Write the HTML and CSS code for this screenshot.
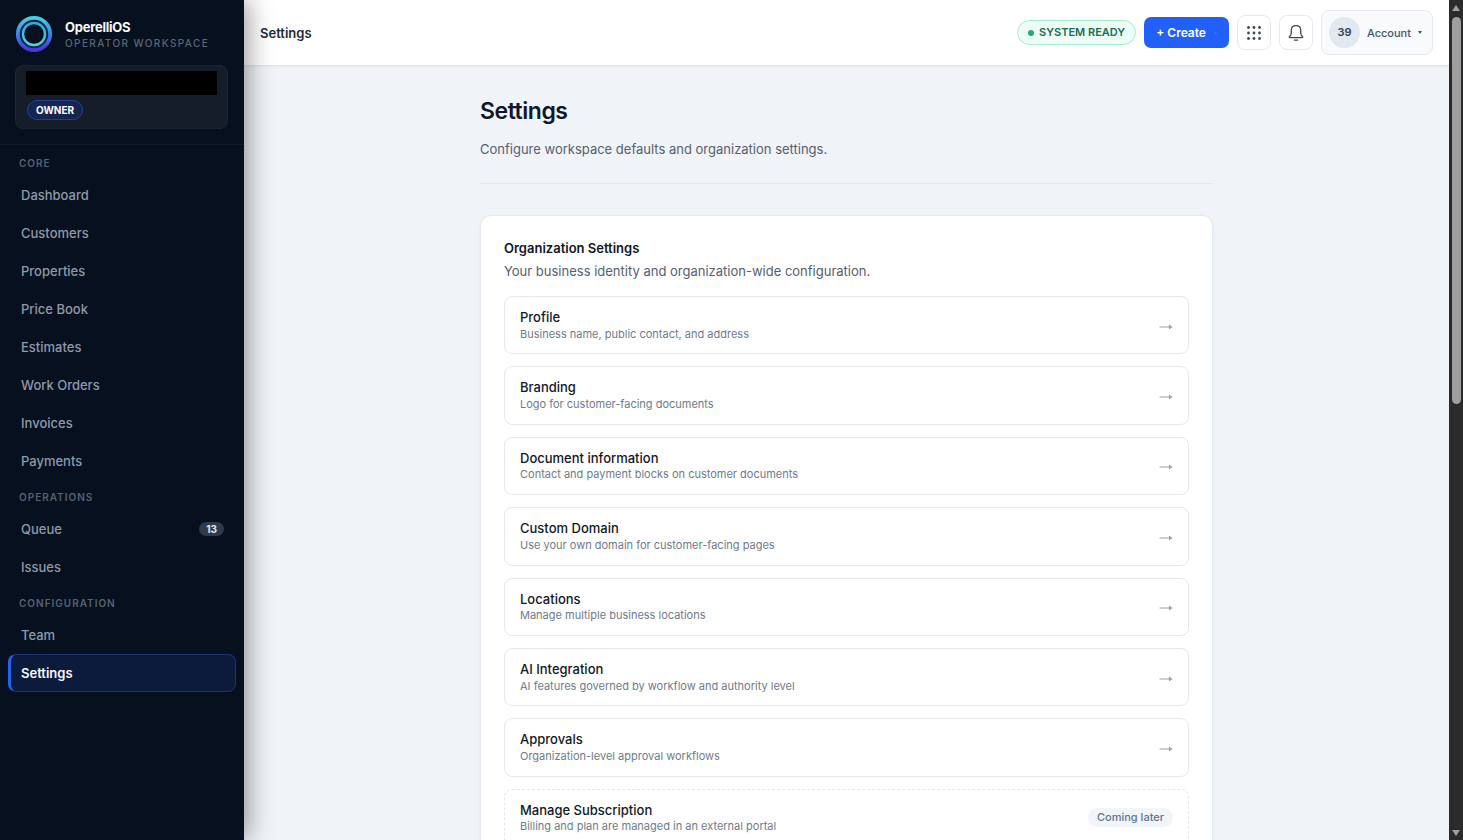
FILE: index.html
```html
<!DOCTYPE html>
<html lang="en">
<head>
<meta charset="utf-8">
<meta name="viewport" content="width=device-width, initial-scale=1">
<title>Settings – OperelliOS</title>
<link rel="stylesheet" href="styles.css">
</head>
<body>
<div class="app">
  <aside class="sidebar">
    <div class="sidebar-head">
      <div class="brand">
        <svg class="brand-logo" viewBox="0 0 38 38" aria-hidden="true">
          <defs>
            <linearGradient id="ring" x1="0" y1="0" x2="0" y2="1">
              <stop offset="0" stop-color="#45cfe0"/>
              <stop offset="0.5" stop-color="#3d86e6"/>
              <stop offset="1" stop-color="#4a35d8"/>
            </linearGradient>
            <linearGradient id="ring-inner" x1="0" y1="0" x2="0" y2="1">
              <stop offset="0" stop-color="#3aa5dc"/>
              <stop offset="1" stop-color="#52d3d8"/>
            </linearGradient>
          </defs>
          <circle cx="19" cy="19" r="14" fill="none" stroke="#10244f" stroke-width="5"/>
          <circle cx="19" cy="19" r="16.2" fill="none" stroke="url(#ring)" stroke-width="3.8"/>
          <circle cx="19" cy="19" r="11" fill="#07101f" stroke="url(#ring-inner)" stroke-width="2.4"/>
        </svg>
        <div class="brand-text">
          <span class="brand-name">OperelliOS</span>
          <span class="brand-sub">OPERATOR WORKSPACE</span>
        </div>
      </div>
      <div class="org">
        <div class="org-name"></div>
        <span class="org-role">OWNER</span>
      </div>
    </div>
    <nav class="nav" aria-label="Main">
      <h2 class="nav-label">CORE</h2>
      <a class="nav-item" href="#dashboard">Dashboard</a>
      <a class="nav-item" href="#customers">Customers</a>
      <a class="nav-item" href="#properties">Properties</a>
      <a class="nav-item" href="#price-book">Price Book</a>
      <a class="nav-item" href="#estimates">Estimates</a>
      <a class="nav-item" href="#work-orders">Work Orders</a>
      <a class="nav-item" href="#invoices">Invoices</a>
      <a class="nav-item" href="#payments">Payments</a>
      <h2 class="nav-label">OPERATIONS</h2>
      <a class="nav-item" href="#queue">Queue <span class="nav-count">13</span></a>
      <a class="nav-item" href="#issues">Issues</a>
      <h2 class="nav-label">CONFIGURATION</h2>
      <a class="nav-item" href="#team">Team</a>
      <a class="nav-item nav-item-active" href="#settings" aria-current="page">Settings</a>
    </nav>
  </aside>

  <div class="workspace">
    <header class="topbar">
      <span class="topbar-title">Settings</span>
      <div class="topbar-actions">
        <span class="status"><span class="status-dot"></span>SYSTEM READY</span>
        <button class="create" type="button"><span>+ Create</span><span class="create-caret"></span></button>
        <button class="icon-button" type="button" aria-label="Apps">
          <svg width="16" height="16" viewBox="0 0 16 16" fill="#3d4757" aria-hidden="true">
            <circle cx="2.500" cy="2.500" r="1.400"/><circle cx="8" cy="2.500" r="1.400"/><circle cx="13.500" cy="2.500" r="1.400"/>
            <circle cx="2.500" cy="8" r="1.400"/><circle cx="8" cy="8" r="1.400"/><circle cx="13.500" cy="8" r="1.400"/>
            <circle cx="2.500" cy="13.500" r="1.400"/><circle cx="8" cy="13.500" r="1.400"/><circle cx="13.500" cy="13.500" r="1.400"/>
          </svg>
        </button>
        <button class="icon-button" type="button" aria-label="Notifications">
          <svg width="18" height="18" viewBox="0 0 18 18" fill="none" stroke="#3d4757" stroke-width="1.3" stroke-linecap="round" stroke-linejoin="round" aria-hidden="true">
            <path d="M9 1.6c-2.900 0-4.700 2-4.700 4.700v2.800c0 1.500-.7 2.600-1.900 3.700-.3.3-.1.8.3.8h12.600c.4 0 .6-.5.3-.8-1.200-1.100-1.900-2.200-1.900-3.700V6.300C13.700 3.600 11.900 1.600 9 1.600z"/>
            <path d="M7.500 16.200h3"/>
          </svg>
        </button>
        <button class="account" type="button">
          <span class="avatar">39</span>
          <span>Account</span>
          <span class="account-caret"></span>
        </button>
      </div>
    </header>

    <main class="content">
      <div class="page">
        <div class="page-head">
          <h1 class="page-title">Settings</h1>
          <p class="page-desc">Configure workspace defaults and organization settings.</p>
        </div>
        <section class="card">
          <h2 class="card-title">Organization Settings</h2>
          <p class="card-desc">Your business identity and organization-wide configuration.</p>
          <div class="rows">
            <a class="row" href="#profile"><span class="row-text"><span class="row-title">Profile</span><span class="row-desc">Business name, public contact, and address</span></span><svg class="arrow" viewBox="0 0 14 8" aria-hidden="true"><path class="arrow-line" d="M0.500 4h11"/><path class="arrow-tip" d="M10 1.500L13.500 4 10 6.500z"/></svg></a>
            <a class="row" href="#branding"><span class="row-text"><span class="row-title">Branding</span><span class="row-desc">Logo for customer-facing documents</span></span><svg class="arrow" viewBox="0 0 14 8" aria-hidden="true"><path class="arrow-line" d="M0.500 4h11"/><path class="arrow-tip" d="M10 1.500L13.500 4 10 6.500z"/></svg></a>
            <a class="row" href="#documents"><span class="row-text"><span class="row-title">Document information</span><span class="row-desc">Contact and payment blocks on customer documents</span></span><svg class="arrow" viewBox="0 0 14 8" aria-hidden="true"><path class="arrow-line" d="M0.500 4h11"/><path class="arrow-tip" d="M10 1.500L13.500 4 10 6.500z"/></svg></a>
            <a class="row" href="#domain"><span class="row-text"><span class="row-title">Custom Domain</span><span class="row-desc">Use your own domain for customer-facing pages</span></span><svg class="arrow" viewBox="0 0 14 8" aria-hidden="true"><path class="arrow-line" d="M0.500 4h11"/><path class="arrow-tip" d="M10 1.500L13.500 4 10 6.500z"/></svg></a>
            <a class="row" href="#locations"><span class="row-text"><span class="row-title">Locations</span><span class="row-desc">Manage multiple business locations</span></span><svg class="arrow" viewBox="0 0 14 8" aria-hidden="true"><path class="arrow-line" d="M0.500 4h11"/><path class="arrow-tip" d="M10 1.500L13.500 4 10 6.500z"/></svg></a>
            <a class="row" href="#ai"><span class="row-text"><span class="row-title">AI Integration</span><span class="row-desc">AI features governed by workflow and authority level</span></span><svg class="arrow" viewBox="0 0 14 8" aria-hidden="true"><path class="arrow-line" d="M0.500 4h11"/><path class="arrow-tip" d="M10 1.500L13.500 4 10 6.500z"/></svg></a>
            <a class="row" href="#approvals"><span class="row-text"><span class="row-title">Approvals</span><span class="row-desc">Organization-level approval workflows</span></span><svg class="arrow" viewBox="0 0 14 8" aria-hidden="true"><path class="arrow-line" d="M0.500 4h11"/><path class="arrow-tip" d="M10 1.500L13.500 4 10 6.500z"/></svg></a>
            <div class="row row-disabled"><span class="row-text"><span class="row-title">Manage Subscription</span><span class="row-desc">Billing and plan are managed in an external portal</span></span><span class="tag">Coming later</span></div>
          </div>
        </section>
      </div>
    </main>
  </div>

  <div class="scrollbar" aria-hidden="true">
    <svg class="scroll-arrow" viewBox="0 0 10 8"><path d="M5 1L9 7H1z"/></svg>
    <div class="scroll-track"><div class="scroll-thumb"></div></div>
    <svg class="scroll-arrow" viewBox="0 0 10 8"><path d="M5 7L1 1h8z"/></svg>
  </div>
</div>
</body>
</html>
```
FILE: styles.css
```css
* {
  box-sizing: border-box;
}

body {
  margin: 0;
  font-family: Inter, "Liberation Sans", sans-serif;
  font-size: 13px;
  color: #111827;
}

h1, h2, p {
  margin: 0;
}

a {
  color: inherit;
  text-decoration: none;
}

button {
  font: inherit;
  cursor: pointer;
}

.app {
  display: grid;
  grid-template-columns: 244px minmax(0, 1fr) 14px;
  height: 100vh;
  overflow: hidden;
}

/* Sidebar */
.sidebar {
  position: relative;
  z-index: 2;
  background: #06101e;
  box-shadow: 4px 0 24px rgba(0, 0, 0, 0.4);
}

.sidebar-head {
  padding: 15px 16px 15px 15px;
  border-bottom: 1px solid #121d2b;
}

.brand {
  display: flex;
  align-items: center;
  gap: 12px;
  height: 38px;
}

.brand-logo {
  width: 38px;
  height: 38px;
}

.brand-text {
  display: flex;
  flex-direction: column;
}

.brand-name {
  font-size: 13px;
  line-height: 18px;
  font-weight: 700;
  letter-spacing: -0.02em;
  color: #f8fafc;
}

.brand-sub {
  font-size: 10px;
  line-height: 14px;
  font-weight: 500;
  letter-spacing: 0.14em;
  color: #5a6778;
}

.org {
  display: flex;
  flex-direction: column;
  align-items: flex-start;
  gap: 5px;
  margin-top: 12px;
  padding: 5px 10px 8px;
  border: 1px solid #1b2633;
  border-radius: 8px;
  background: #141d29;
}

.org-name {
  width: 100%;
  height: 24px;
  background: #000;
}

.org-role {
  margin-left: 1px;
  padding: 0 8px;
  border: 1px solid #24408c;
  border-radius: 10px;
  background: #162550;
  font-size: 10px;
  line-height: 18px;
  font-weight: 700;
  color: #fff;
}

.nav {
  display: flex;
  flex-direction: column;
  padding: 1px 8px;
}

.nav-label {
  padding: 10px 11px 6px;
  font-size: 10px;
  line-height: 14px;
  font-weight: 600;
  letter-spacing: 0.1em;
  color: #566273;
}

.nav-item {
  display: flex;
  align-items: center;
  justify-content: space-between;
  height: 38px;
  padding: 0 11px 0 10px;
  border: 1px solid transparent;
  border-left-width: 3px;
  border-radius: 8px;
  font-size: 13px;
  font-weight: 500;
  color: #8f9aaa;
}

.nav-item-active {
  border-color: #1d3474;
  border-left-color: #2563eb;
  background: #0c1a3c;
  font-weight: 600;
  color: #f8fafc;
}

.nav-count {
  padding: 0 7px;
  border-radius: 8px;
  background: #303b4a;
  font-size: 10px;
  line-height: 14px;
  font-weight: 700;
  color: #e2e8f0;
}

/* Top bar */
.workspace {
  display: flex;
  flex-direction: column;
  min-width: 0;
  min-height: 0;
  background: #f0f3f8;
}

.topbar {
  display: flex;
  flex: none;
  align-items: center;
  justify-content: space-between;
  height: 66px;
  padding: 0 16px;
  border-bottom: 1px solid #e2e5ec;
  background: #fff;
  box-shadow: 0 1px 2px rgba(15, 23, 42, 0.05);
}

.topbar-title {
  font-size: 13px;
  font-weight: 600;
  color: #1e293b;
}

.topbar-actions {
  display: flex;
  align-items: center;
  gap: 8px;
}

.status {
  display: flex;
  align-items: center;
  gap: 5px;
  padding: 0 10px;
  border: 1px solid #a7ecd0;
  border-radius: 13px;
  background: #ecfdf5;
  font-size: 11px;
  line-height: 23px;
  font-weight: 600;
  color: #256b53;
}

.status-dot {
  width: 6px;
  height: 6px;
  border-radius: 50%;
  background: #1fae7a;
}

.create {
  display: flex;
  align-items: center;
  gap: 8px;
  height: 31px;
  padding: 0 12px;
  border: 0;
  border-radius: 7px;
  background: #2160fb;
  font-size: 12px;
  font-weight: 600;
  color: #fff;
}

.create-caret {
  width: 3px;
  height: 2px;
  border-radius: 1px;
  background: #3f6fdf;
}

.icon-button {
  display: flex;
  align-items: center;
  justify-content: center;
  width: 34px;
  height: 35px;
  padding: 0;
  border: 1px solid #e5e9ef;
  border-radius: 8px;
  background: #fff;
}

.account {
  display: flex;
  align-items: center;
  gap: 7px;
  height: 45px;
  padding: 0 10px 0 7px;
  border: 1px solid #e5e9ef;
  border-radius: 8px;
  background: #f8fafc;
  font-size: 11px;
  font-weight: 500;
  color: #4b5563;
}

.avatar {
  width: 31px;
  border-radius: 50%;
  background: #e2e8f0;
  font-size: 11px;
  line-height: 31px;
  font-weight: 600;
  text-align: center;
  color: #334155;
}

.account-caret {
  border: 2px solid transparent;
  border-top: 3px solid #4b5563;
  border-bottom: 0;
}

/* Page */
.content {
  flex: 1;
  min-height: 0;
  padding: 28px 24px;
  overflow: hidden;
}

.page {
  max-width: 733px;
  margin: 0 auto;
}

.page-head {
  padding-bottom: 24px;
  border-bottom: 1px solid #e1e6ed;
}

.page-title {
  font-size: 23px;
  line-height: 34px;
  font-weight: 600;
  letter-spacing: -0.02em;
  color: #0f172a;
}

.page-desc {
  margin-top: 11px;
  font-size: 13px;
  line-height: 20px;
  color: #556070;
}

.card {
  margin-top: 31px;
  padding: 22px 23px;
  border: 1px solid #e5e9f0;
  border-radius: 11px;
  background: #fff;
  box-shadow: 0 1px 3px rgba(15, 23, 42, 0.06);
}

.card-title {
  font-size: 13px;
  line-height: 20px;
  font-weight: 600;
  color: #0f172a;
}

.card-desc {
  margin-top: 3px;
  font-size: 13px;
  line-height: 20px;
  color: #556070;
}

.rows {
  display: flex;
  flex-direction: column;
  gap: 12px;
  margin-top: 15px;
}

.row {
  display: flex;
  align-items: center;
  justify-content: space-between;
  padding: 12px 15px;
  border: 1px solid #e5e8ed;
  border-radius: 8px;
  background: #fff;
  line-height: 1.35;
}

.row-disabled {
  border-style: dashed;
}

.row-text {
  display: flex;
  flex-direction: column;
}

.row-title {
  font-size: 13px;
  font-weight: 500;
  color: #111827;
}

.row-desc {
  font-size: 11px;
  color: #6f7b8c;
}

.arrow {
  width: 14px;
  height: 8px;
  margin-top: 3px;
}

.arrow-line {
  stroke: #9aa0aa;
  stroke-width: 1;
}

.arrow-tip {
  fill: #9aa0aa;
}

.tag {
  padding: 0 9px;
  border-radius: 10px;
  background: #f1f5f9;
  font-size: 11px;
  line-height: 19px;
  font-weight: 500;
  color: #64748b;
}

/* Scrollbar */
.scrollbar {
  display: flex;
  flex-direction: column;
  align-items: center;
  padding: 4px 0 3px;
  background: #2b2b2b;
}

.scroll-arrow {
  flex: none;
  width: 10px;
  height: 8px;
  fill: #9f9f9f;
}

.scroll-track {
  flex: 1;
  width: 9px;
  padding: 5px 0;
}

.scroll-thumb {
  height: 48%;
  border-radius: 5px;
  background: #9f9f9f;
}
```
